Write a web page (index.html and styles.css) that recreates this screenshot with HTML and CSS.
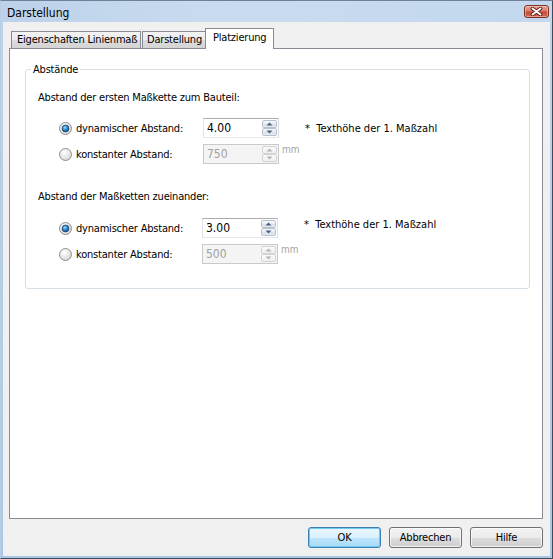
FILE: index.html
```html
<!DOCTYPE html>
<html lang="de">
<head>
<meta charset="utf-8">
<title>Darstellung</title>
<link rel="stylesheet" href="styles.css">
</head>
<body>
<div class="window">
  <div class="titlebar">
    <span class="title">Darstellung</span>
    <span class="close">
      <svg width="13" height="9" viewBox="0 0 13 9"><path d="M2.5 1.5 L10.5 7.5 M10.5 1.5 L2.5 7.5" stroke="#5a2018" stroke-width="3.6" stroke-linecap="round"/><path d="M2.5 1.5 L10.5 7.5 M10.5 1.5 L2.5 7.5" stroke="#fff" stroke-width="1.8" stroke-linecap="round"/></svg>
    </span>
  </div>
  <div class="client">
    <div class="tabs">
      <div class="tab tab-1">Eigenschaften Linienmaß</div>
      <div class="tab tab-2">Darstellung</div>
      <div class="tab tab-active">Platzierung</div>
    </div>
    <div class="panel">
      <fieldset class="group">
        <legend class="legend">Abstände</legend>

        <div class="section-label first">Abstand der ersten Maßkette zum Bauteil:</div>
        <div class="row">
          <svg class="radio" width="13" height="13" viewBox="0 0 13 13"><defs><radialGradient id="rg1" cx="0.4" cy="0.35" r="0.7"><stop offset="0" stop-color="#ffffff"/><stop offset="1" stop-color="#d4d4d4"/></radialGradient><radialGradient id="dot1" cx="0.4" cy="0.35" r="0.7"><stop offset="0" stop-color="#9fdcff"/><stop offset="0.5" stop-color="#2a8ad4"/><stop offset="1" stop-color="#0c4e8c"/></radialGradient></defs><circle cx="6.5" cy="6.5" r="6" fill="url(#rg1)" stroke="#8e8f8f"/><circle cx="6.5" cy="6.5" r="3.4" fill="url(#dot1)" stroke="#1c3f66" stroke-width="0.8"/></svg>
          <span class="opt-label">dynamischer Abstand:</span>
          <div class="spin">
            <span class="spin-value">4.00</span>
            <span class="spin-btns">
              <span class="spin-btn"><svg width="7" height="4" viewBox="0 0 7 4"><path d="M0.5 3.5 L3.5 0.5 L6.5 3.5 Z" fill="#4c607f"/></svg></span>
              <span class="spin-btn"><svg width="7" height="4" viewBox="0 0 7 4"><path d="M0.5 0.5 L3.5 3.5 L6.5 0.5 Z" fill="#4c607f"/></svg></span>
            </span>
          </div>
          <span class="note">*&nbsp; Texthöhe der 1. Maßzahl</span>
        </div>
        <div class="row">
          <svg class="radio" width="13" height="13" viewBox="0 0 13 13"><defs><radialGradient id="rg2" cx="0.4" cy="0.35" r="0.7"><stop offset="0" stop-color="#ffffff"/><stop offset="1" stop-color="#d4d4d4"/></radialGradient></defs><circle cx="6.5" cy="6.5" r="6" fill="url(#rg2)" stroke="#8e8f8f"/></svg>
          <span class="opt-label">konstanter Abstand:</span>
          <div class="spin disabled">
            <span class="spin-value">750</span>
            <span class="spin-btns">
              <span class="spin-btn"><svg width="7" height="4" viewBox="0 0 7 4"><path d="M0.5 3.5 L3.5 0.5 L6.5 3.5 Z" fill="#b4b4b4"/></svg></span>
              <span class="spin-btn"><svg width="7" height="4" viewBox="0 0 7 4"><path d="M0.5 0.5 L3.5 3.5 L6.5 0.5 Z" fill="#b4b4b4"/></svg></span>
            </span>
          </div>
          <span class="unit">mm</span>
        </div>

        <div class="section-label second">Abstand der Maßketten zueinander:</div>
        <div class="row">
          <svg class="radio" width="13" height="13" viewBox="0 0 13 13"><defs><radialGradient id="rg3" cx="0.4" cy="0.35" r="0.7"><stop offset="0" stop-color="#ffffff"/><stop offset="1" stop-color="#d4d4d4"/></radialGradient><radialGradient id="dot3" cx="0.4" cy="0.35" r="0.7"><stop offset="0" stop-color="#9fdcff"/><stop offset="0.5" stop-color="#2a8ad4"/><stop offset="1" stop-color="#0c4e8c"/></radialGradient></defs><circle cx="6.5" cy="6.5" r="6" fill="url(#rg3)" stroke="#8e8f8f"/><circle cx="6.5" cy="6.5" r="3.4" fill="url(#dot3)" stroke="#1c3f66" stroke-width="0.8"/></svg>
          <span class="opt-label">dynamischer Abstand:</span>
          <div class="spin spin-shift">
            <span class="spin-value">3.00</span>
            <span class="spin-btns">
              <span class="spin-btn"><svg width="7" height="4" viewBox="0 0 7 4"><path d="M0.5 3.5 L3.5 0.5 L6.5 3.5 Z" fill="#4c607f"/></svg></span>
              <span class="spin-btn"><svg width="7" height="4" viewBox="0 0 7 4"><path d="M0.5 0.5 L3.5 3.5 L6.5 0.5 Z" fill="#4c607f"/></svg></span>
            </span>
          </div>
          <span class="note note-top">*&nbsp; Texthöhe der 1. Maßzahl</span>
        </div>
        <div class="row">
          <svg class="radio" width="13" height="13" viewBox="0 0 13 13"><defs><radialGradient id="rg4" cx="0.4" cy="0.35" r="0.7"><stop offset="0" stop-color="#ffffff"/><stop offset="1" stop-color="#d4d4d4"/></radialGradient></defs><circle cx="6.5" cy="6.5" r="6" fill="url(#rg4)" stroke="#8e8f8f"/></svg>
          <span class="opt-label">konstanter Abstand:</span>
          <div class="spin disabled spin-shift">
            <span class="spin-value">500</span>
            <span class="spin-btns">
              <span class="spin-btn"><svg width="7" height="4" viewBox="0 0 7 4"><path d="M0.5 3.5 L3.5 0.5 L6.5 3.5 Z" fill="#b4b4b4"/></svg></span>
              <span class="spin-btn"><svg width="7" height="4" viewBox="0 0 7 4"><path d="M0.5 0.5 L3.5 3.5 L6.5 0.5 Z" fill="#b4b4b4"/></svg></span>
            </span>
          </div>
          <span class="unit">mm</span>
        </div>
      </fieldset>
    </div>
    <div class="buttons">
      <span class="btn btn-default">OK</span>
      <span class="btn">Abbrechen</span>
      <span class="btn">Hilfe</span>
    </div>
  </div>
</div>
</body>
</html>
```

FILE: styles.css
```css
html, body {
  margin: 0;
  padding: 0;
  background: #ffffff;
}

.window {
  width: 553px;
  height: 559px;
  box-sizing: border-box;
  border: 1px solid #3e4c5a;
  border-left-color: #b9cde2;
  border-top-color: #6f8196;
  background: linear-gradient(#cadcf0, #bcd3ec 30px, #a9c8e6);
  display: flex;
  flex-direction: column;
  font-family: "DejaVu Sans Condensed", "DejaVu Sans", sans-serif;
  font-size: 11px;
  line-height: 13px;
  letter-spacing: -0.2px;
  color: #000;
}

.titlebar {
  height: 21px;
  display: flex;
  align-items: flex-start;
  justify-content: space-between;
  padding: 0 3px 0 6px;
  background: linear-gradient(90deg, #bcd2ea, #c9dbef 40%, #c3d8ee);
}

.title {
  font-size: 12px;
  line-height: 14px;
  margin-top: 5px;
  letter-spacing: 0;
}

.close {
  width: 25px;
  height: 13px;
  margin-top: 4px;
  box-sizing: border-box;
  border: 1px solid #7b3328;
  border-radius: 3px;
  background: linear-gradient(#e9a99b, #d47a6b 45%, #c34a38 55%, #d26a55);
  box-shadow: inset 0 0 0 1px rgba(255, 210, 200, 0.5);
  display: flex;
  align-items: center;
  justify-content: center;
}

.client {
  flex: 1;
  margin: 0 2px 2px 2px;
  background: #f0f0f0;
  display: flex;
  flex-direction: column;
  padding: 6px 7px 8px 6px;
}

.tabs {
  display: flex;
  align-items: flex-end;
  height: 20px;
  padding-left: 2px;
}

.tab {
  box-sizing: border-box;
  height: 17px;
  border: 1px solid #898c95;
  border-bottom: none;
  background: linear-gradient(#f3f3f3, #ebebeb 50%, #dedede 51%, #d3d3d3);
  padding: 1px 0 0 5px;
  white-space: nowrap;
  overflow: hidden;
}

.tab-1 {
  width: 130px;
}

.tab-2 {
  width: 64px;
  margin-left: 1px;
  padding-left: 4px;
}

.tab-active {
  position: relative;
  z-index: 1;
  width: 69px;
  height: 21px;
  margin-left: -1px;
  margin-bottom: -1px;
  background: #ffffff;
  padding: 2px 0 0 7px;
}

.panel {
  flex: 1;
  background: #ffffff;
  border: 1px solid #898c95;
  display: flex;
  flex-direction: column;
}

.group {
  margin: 14px 12px 0 15px;
  padding: 0 0 24px 0;
  border: 1px solid #d5dfe5;
  border-radius: 3px;
  min-width: 0;
}

.legend {
  margin-left: 5px;
  padding: 0 2px;
  line-height: 13px;
}

.section-label {
  margin-left: 12px;
}

.section-label.first {
  margin-top: 15px;
}

.section-label.second {
  margin-top: 26px;
}

.row {
  display: flex;
  align-items: center;
  height: 20px;
  margin-top: 6px;
  margin-left: 33px;
}

.section-label + .row {
  margin-top: 14px;
}

.section-label.second + .row {
  margin-top: 15px;
}

.radio {
  flex: none;
  margin-right: 4px;
}

.opt-label {
  width: 127px;
  flex: none;
  white-space: nowrap;
}

.spin {
  flex: none;
  box-sizing: border-box;
  width: 76px;
  height: 20px;
  border: 1px solid #abadb3;
  border-right-color: #dbdfe6;
  border-bottom-color: #e3e9ef;
  border-left-color: #e2e3ea;
  background: #ffffff;
  display: flex;
  align-items: stretch;
  padding: 1px;
  letter-spacing: 0;
}

.spin-shift {
  margin-left: -1px;
}

.spin-value {
  flex: 1;
  font-size: 12px;
  line-height: 16px;
  padding-left: 2px;
}

.spin-btns {
  width: 15px;
  display: flex;
  flex-direction: column;
}

.spin-btn {
  flex: 1;
  box-sizing: border-box;
  border: 1px solid #b8c2cf;
  border-radius: 2px;
  background: linear-gradient(#f8f9fb, #e6ebf1 50%, #d9e1ea 51%, #e4eaf1);
  display: flex;
  align-items: center;
  justify-content: center;
}

.spin.disabled {
  background: #f4f4f4;
  border-color: #c9c9c9;
}

.spin.disabled .spin-value {
  color: #a0a0a0;
}

.spin.disabled .spin-btn {
  border-color: #d3d3d3;
  background: linear-gradient(#fafafa, #efefef);
}

.note {
  margin-left: 26px;
  white-space: nowrap;
  letter-spacing: 0;
}

.note-top {
  align-self: flex-start;
  line-height: 14px;
}

.unit {
  align-self: flex-start;
  margin-left: 3px;
  font-size: 10px;
  line-height: 12px;
  color: #a3a3a3;
  letter-spacing: 0;
}

.buttons {
  display: flex;
  justify-content: flex-end;
  gap: 8px;
  margin-top: 8px;
}

.btn {
  box-sizing: border-box;
  width: 73px;
  height: 21px;
  border: 1px solid #707070;
  border-radius: 3px;
  background: linear-gradient(#f2f2f2, #ebebeb 50%, #dddddd 51%, #cfcfcf);
  box-shadow: inset 0 0 0 1px rgba(255, 255, 255, 0.7);
  display: flex;
  align-items: center;
  justify-content: center;
  line-height: 13px;
}

.btn-default {
  border-color: #3c7fb1;
  background: linear-gradient(#eaf6fd, #d9f0fc 50%, #bee6fd 51%, #a7d9f5);
  box-shadow: inset 0 0 0 1px #6fc9f0;
}
```
